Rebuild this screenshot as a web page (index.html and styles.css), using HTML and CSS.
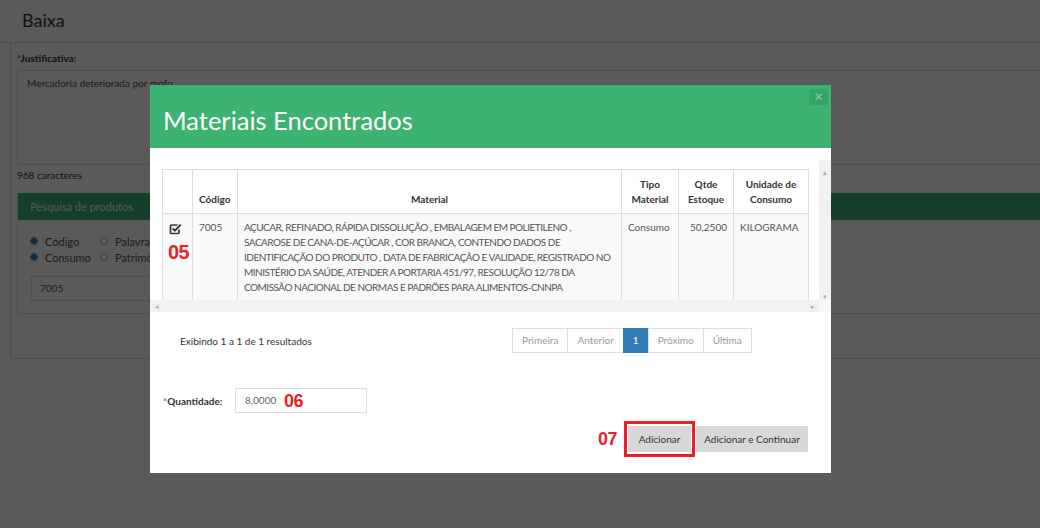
FILE: index.html
```html
<!DOCTYPE html>
<html lang="pt-BR">
<head>
<meta charset="utf-8">
<title>Baixa</title>
<link rel="stylesheet" href="styles.css">
</head>
<body>
<div class="page">
  <header class="page-head"><h1 class="page-title">Baixa</h1></header>
  <section class="card">
    <div class="field-label"><span class="req">*</span>Justificativa:</div>
    <div class="textarea">Mercadoria deteriorada por mofo.</div>
    <div class="counter">968 caracteres</div>
    <div class="panel">
      <div class="panel-head">Pesquisa de produtos</div>
      <div class="panel-body">
        <div class="radio-grid">
          <label class="radio"><span class="dot on"></span>Código</label>
          <label class="radio"><span class="dot"></span>Palavra-chave</label>
          <label class="radio"><span class="dot on"></span>Consumo</label>
          <label class="radio"><span class="dot"></span>Patrimônio</label>
        </div>
        <div class="search-input">7005</div>
      </div>
    </div>
  </section>
</div>

<div class="backdrop"></div>

<div class="modal">
  <div class="modal-head">
    <h2 class="modal-title">Materiais Encontrados</h2>
    <span class="modal-close">×</span>
  </div>
  <div class="modal-body">
    <div class="scroller">
      <div class="scroll-view">
        <table class="grid">
          <colgroup>
            <col class="w-check"><col class="w-code"><col class="w-mat"><col class="w-tipo"><col class="w-qtd"><col class="w-un">
          </colgroup>
          <thead>
            <tr>
              <th></th>
              <th class="c-code">Código</th>
              <th>Material</th>
              <th>Tipo<br>Material</th>
              <th>Qtde<br>Estoque</th>
              <th>Unidade de<br>Consumo</th>
            </tr>
          </thead>
          <tbody>
            <tr>
              <td class="c-check">
                <svg class="chk" width="13" height="12" viewBox="0 0 13 12"><path d="M8.5 2H2.6A1.1 1.1 0 0 0 1.5 3.1v6.3a1.1 1.1 0 0 0 1.1 1.1h6.3a1.1 1.1 0 0 0 1.1-1.1V6.5" fill="none" stroke="#333" stroke-width="1.7"/><path d="M3.6 5.4l2.2 2.2L11.8 1.6" fill="none" stroke="#333" stroke-width="2"/></svg>
                <div class="mark mark-05">05</div>
              </td>
              <td>7005</td>
              <td class="mat-text">AÇUCAR, REFINADO, RÁPIDA DISSOLUÇÃO , EMBALAGEM EM POLIETILENO ,<br>SACAROSE DE CANA-DE-AÇÚCAR , COR BRANCA, CONTENDO DADOS DE<br>IDENTIFICAÇÃO DO PRODUTO , DATA DE FABRICAÇÃO E VALIDADE, REGISTRADO NO<br>MINISTÉRIO DA SAÚDE, ATENDER A PORTARIA 451/97, RESOLUÇÃO 12/78 DA<br>COMISSÃO NACIONAL DE NORMAS E PADRÕES PARA ALIMENTOS-CNNPA</td>
              <td>Consumo</td>
              <td class="num">50,2500</td>
              <td>KILOGRAMA</td>
            </tr>
          </tbody>
        </table>
      </div>
      <div class="vbar"><span class="arr">▴</span><span class="arr">▾</span></div>
      <div class="hbar"><span class="arr">◂</span><span class="arr">▸</span></div>
      <div class="corner"></div>
    </div>

    <div class="pager-row">
      <div class="result-info">Exibindo 1 a 1 de 1 resultados</div>
      <ul class="pagination">
        <li>Primeira</li>
        <li>Anterior</li>
        <li class="active">1</li>
        <li>Próximo</li>
        <li>Última</li>
      </ul>
    </div>

    <div class="qty-row">
      <div class="qty-label"><span class="req">*</span>Quantidade:</div>
      <div class="qty-input">8,0000<span class="mark mark-06">06</span></div>
    </div>

    <div class="actions">
      <span class="mark mark-07">07</span>
      <div class="highlight"><button class="btn">Adicionar</button></div>
      <button class="btn">Adicionar e Continuar</button>
    </div>
  </div>
</div>
</body>
</html>
```
FILE: styles.css
```css
* { box-sizing: border-box; }
html, body { margin: 0; padding: 0; }
body {
  width: 1040px;
  height: 528px;
  overflow: hidden;
  position: relative;
  background: #fff;
  color: #333;
  font-family: Lato, "Open Sans", sans-serif;
  font-size: 11px;
}

/* ---------- background page ---------- */
.page { width: 1040px; overflow: hidden; }
.page-head {
  height: 43px;
  border-bottom: 1px solid #ddd;
  padding: 10px 0 0 22px;
}
.page-title { margin: 0; font-size: 18px; line-height: 20px; font-weight: 400; color: #333; }

.card {
  margin-left: 10px;
  height: 316px;
  border-left: 1px solid #ddd;
  border-bottom: 1px solid #ddd;
  padding: 8px 0 0 6px;
}
.field-label { font-weight: 700; font-size: 10px; line-height: 14px; color: #333; }
.req { color: #d9534f; }
.textarea {
  margin-top: 5px;
  height: 95px;
  border: 1px solid #ddd;
  border-right: none;
  padding: 6px 9px;
  font-size: 10px;
  line-height: 13px;
  color: #555;
}
.counter { margin-top: 3px; font-size: 10px; line-height: 14px; color: #333; }

.panel {
  margin-top: 11px;
  border-left: 1px solid #ddd;
  border-bottom: 1px solid #ddd;
  height: 121px;
}
.panel-head {
  height: 27px;
  background: #3cb371;
  color: #f0f7f2;
  font-size: 11px;
  line-height: 27px;
  padding-left: 12px;
}
.panel-body { padding: 13px 0 0 13px; }
.radio-grid { display: grid; grid-template-columns: 70px 200px; }
.radio { display: flex; align-items: center; height: 16px; font-size: 11px; color: #555; }
.dot {
  width: 8px; height: 8px;
  border: 1px solid #aaa;
  border-radius: 50%;
  margin-right: 7px;
  margin-left: -1px;
}
.dot.on { border-color: #337ab7; background: radial-gradient(circle, #337ab7 0 2.5px, #fff 3px); }
.search-input {
  margin-top: 11px;
  width: 380px;
  height: 25px;
  border: 1px solid #ddd;
  padding-left: 8px;
  font-size: 10px;
  line-height: 23px;
  color: #555;
}

.backdrop {
  position: absolute;
  inset: 0;
  background: rgba(0, 0, 0, 0.647);
}

/* ---------- modal ---------- */
.modal {
  position: absolute;
  left: 150px;
  top: 85px;
  width: 681px;
  height: 388px;
  background: #fff;
}
.modal-head {
  position: relative;
  height: 63px;
  background: #3cb371;
  padding: 20px 13px 0;
}
.modal-title {
  margin: 0;
  font-size: 25.5px;
  line-height: 30px;
  font-weight: 400;
  color: #fff;
}
.modal-close {
  position: absolute;
  right: 3px;
  top: 4px;
  width: 19px;
  height: 16px;
  background: #35a466;
  color: #8fd1aa;
  font-size: 15px;
  line-height: 15px;
  text-align: center;
}

.modal-body { padding-top: 12px; }

.scroller {
  display: grid;
  grid-template-columns: 669px 12px;
  grid-template-rows: 140px 12px;
}
.scroll-view { overflow: hidden; padding: 9px 0 0 12px; }
.vbar, .hbar, .corner { background: #f1f1f1; }
.vbar {
  display: flex;
  flex-direction: column;
  justify-content: space-between;
  align-items: center;
  padding: 8px 0 0;
}
.hbar {
  display: flex;
  justify-content: space-between;
  align-items: center;
  padding: 0 4px 0 5px;
}
.corner { background: #f7f7f7; }
.arr { color: #a8a8a8; font-size: 7px; line-height: 8px; }

.grid {
  width: 646px;
  table-layout: fixed;
  border-collapse: collapse;
  font-size: 10px;
  line-height: 15px;
}
.w-check { width: 30px; }
.w-code { width: 45px; }
.w-mat { width: 384px; }
.w-tipo { width: 57px; }
.w-qtd { width: 55px; }
.w-un { width: 75px; }
.grid th, .grid td { border: 1px solid #ddd; }
.grid th {
  height: 44px;
  vertical-align: bottom;
  padding: 0 3px 6px;
  font-weight: 700;
  color: #333;
  text-align: center;
  background: #fff;
}
.grid td {
  vertical-align: top;
  padding: 6px 6px 4px;
  color: #555;
  background: #f9f9f9;
  height: 87px;
}
.grid th.c-code { text-align: left; padding-left: 6px; }
.grid td.c-check { padding: 9px 0 0 6px; }
.grid td.mat-text { white-space: nowrap; letter-spacing: -0.5px; }
.grid td.num { text-align: right; }
.chk { display: block; }

.mark {
  font-family: "Liberation Sans", Arial, sans-serif;
  font-weight: 700;
  color: #e8202a;
  letter-spacing: -0.5px;
}
.mark-05 { font-size: 20px; line-height: 20px; margin-top: 7px; margin-left: -1px; }

.pager-row {
  display: flex;
  align-items: center;
  margin-top: 16px;
  padding-left: 30px;
}
.result-info { width: 332px; font-size: 10px; color: #333; }
.pagination {
  display: flex;
  list-style: none;
  margin: 0;
  padding: 0;
}
.pagination li {
  height: 25px;
  line-height: 23px;
  padding: 0 9px;
  border: 1px solid #ddd;
  margin-left: -1px;
  font-size: 10px;
  color: #999;
}
.pagination li:first-child { margin-left: 0; }
.pagination li.active {
  background: #337ab7;
  border-color: #337ab7;
  color: #fff;
  padding: 0 9px;
}

.qty-row {
  display: flex;
  align-items: center;
  margin-top: 35px;
  padding-left: 13px;
}
.qty-label { width: 72px; font-weight: 700; font-size: 10px; color: #333; }
.qty-input {
  position: relative;
  width: 132px;
  height: 25px;
  border: 1px solid #ddd;
  padding-left: 9px;
  font-size: 10px;
  line-height: 23px;
  color: #666;
}
.mark-06 {
  position: absolute;
  left: 48px;
  top: 2px;
  font-size: 18px;
  line-height: 20px;
}

.actions {
  display: flex;
  justify-content: flex-end;
  align-items: center;
  margin-top: 8px;
  padding-right: 23px;
}
.mark-07 { font-size: 18px; line-height: 20px; margin-right: 7px; }
.highlight {
  border: 3px solid #e8202a;
  padding: 2px 1px;
  margin-right: 1px;
}
.btn {
  display: block;
  height: 26px;
  border: none;
  background: #d8d8d8;
  color: #333;
  font-family: Lato, "Open Sans", sans-serif;
  font-size: 10px;
  padding: 0;
}
.highlight .btn { width: 63px; }
.actions > .btn { width: 112px; }
```
